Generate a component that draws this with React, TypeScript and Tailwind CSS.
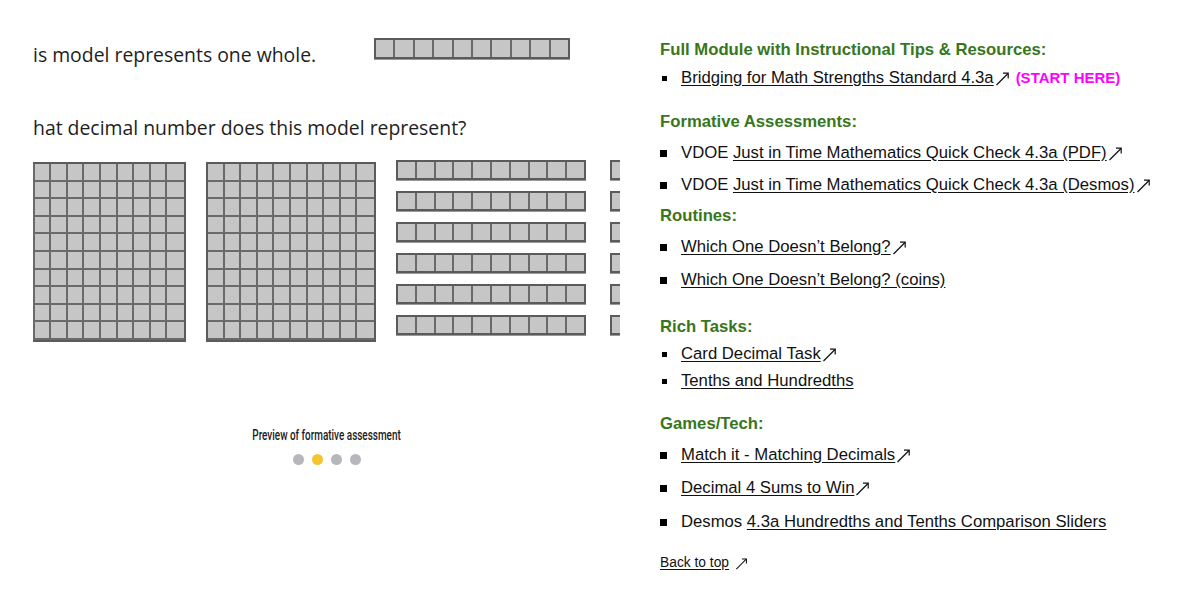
import React from 'react';

const cells = Array.from({ length: 10 }, (_, i) => i);
const rows = Array.from({ length: 6 }, (_, i) => i);

function Strip({ w }: { w: string }) {
  return (
    <div className={`flex shrink-0 ${w} h-[20px] border-2 border-[#5b5b5b] bg-[#c6c6c6] shadow-[0_1px_0_#999]`}>
      {cells.map((c) => (
        <div key={c} className="flex-1 border-r-2 border-[#6a6a6a] last:border-r-0" />
      ))}
    </div>
  );
}

function Hundred() {
  return (
    <div className="grid shrink-0 grid-cols-10 grid-rows-10 w-[170px] h-[180px] border-2 border-[#5b5b5b] bg-[#c6c6c6]">
      {Array.from({ length: 100 }, (_, i) => (
        <div key={i} className="border-r-2 border-b-2 border-[#6a6a6a] [&:nth-child(10n)]:border-r-0" />
      ))}
    </div>
  );
}

function Arrow({ small }: { small?: boolean }) {
  const s = small ? 13 : 15;
  return (
    <svg width={s} height={s} viewBox="0 0 15 15" className="inline-block ml-[1px] shrink-0" fill="none" stroke="#111" strokeWidth="1.2">
      <path d="M1.5 14 L13 2.5" />
      <path d="M8 2.2 H13.2 V7.5" />
    </svg>
  );
}

function Bullet({ big }: { big?: boolean }) {
  return big ? (
    <span className="w-[7px] h-[7px] bg-black shrink-0 mr-[14px]" />
  ) : (
    <span className="w-[5px] h-[5px] bg-black shrink-0 ml-[2px] mr-[14px]" />
  );
}

function Heading({ children, className = '' }: { children: React.ReactNode; className?: string }) {
  return <h2 className={`text-[16.7px] leading-6 font-bold text-[#38761d] ${className}`}>{children}</h2>;
}

function Item({ big, className = '', children }: { big?: boolean; className?: string; children: React.ReactNode }) {
  return (
    <li className={`flex items-center leading-6 whitespace-nowrap ${className}`}>
      <Bullet big={big} />
      <span className="flex items-center">{children}</span>
    </li>
  );
}

export default function App() {
  return (
    <div className="flex w-[1200px] h-[605px] bg-white overflow-hidden">
      <div className="ml-[33px] w-[587px] shrink-0 flex flex-col">
        <div className="overflow-hidden font-['Open_Sans',sans-serif] text-[#1e1e1e]">
          <div className="flex items-start pt-[38px]">
            <span className="text-[19.4px] leading-[30px] mt-[2px] w-[341px] shrink-0">is model represents one whole.</span>
            <Strip w="w-[196px] h-[21px]" />
          </div>
          <div className="text-[19.4px] leading-[30px] mt-[43px] whitespace-nowrap">hat decimal number does this model represent?</div>
          <div className="flex items-start mt-[19px] ml-[-17px] gap-[20px] w-[800px]">
            <Hundred />
            <Hundred />
            <div className="flex flex-col gap-[11px] -mt-[2px] shrink-0">
              {rows.map((r) => (
                <Strip key={r} w="w-[190px]" />
              ))}
            </div>
            <div className="flex flex-col gap-[11px] -mt-[2px] ml-[4px] shrink-0">
              {rows.map((r) => (
                <Strip key={r} w="w-[190px]" />
              ))}
            </div>
          </div>
        </div>
        <div className="mt-[85px] flex justify-center">
          <p className="inline-block scale-x-[0.71] whitespace-nowrap text-[14px] leading-4 font-medium text-[#1c1c1c] font-['Roboto',sans-serif]">
            Preview of formative assessment
          </p>
        </div>
        <div className="flex justify-center gap-[8px] mt-[11px]">
          <span className="w-[11px] h-[11px] rounded-full bg-[#b5b7bb]" />
          <span className="w-[11px] h-[11px] rounded-full bg-[#f3c630]" />
          <span className="w-[11px] h-[11px] rounded-full bg-[#b5b7bb]" />
          <span className="w-[11px] h-[11px] rounded-full bg-[#b5b7bb]" />
        </div>
      </div>

      <div className="ml-[40px] pt-[38px] flex-1 font-['Liberation_Sans',Arial,sans-serif] text-[16.7px] text-[#111]">
        <Heading>Full Module with Instructional Tips &amp; Resources:</Heading>
        <ul className="mt-[4px]">
          <Item>
            <a className="underline underline-offset-2">Bridging for Math Strengths Standard 4.3a</a>
            <Arrow />
            <span className="ml-[6px] text-[15px] font-bold text-[#ff00ff]">(START HERE)</span>
          </Item>
        </ul>

        <Heading className="mt-[20px]">Formative Assessments:</Heading>
        <ul>
          <Item big className="mt-[7px]">
            VDOE&nbsp;<a className="underline underline-offset-2">Just in Time Mathematics Quick Check 4.3a (PDF)</a>
            <Arrow />
          </Item>
          <Item big className="mt-[8px]">
            VDOE&nbsp;<a className="underline underline-offset-2">Just in Time Mathematics Quick Check 4.3a (Desmos)</a>
            <Arrow />
          </Item>
        </ul>

        <Heading className="mt-[7px]">Routines:</Heading>
        <ul>
          <Item big className="mt-[7px]">
            <a className="underline underline-offset-2">Which One Doesn’t Belong?</a>
            <Arrow />
          </Item>
          <Item big className="mt-[9px]">
            <a className="underline underline-offset-2">Which One Doesn’t Belong? (coins)</a>
          </Item>
        </ul>

        <Heading className="mt-[23px]">Rich Tasks:</Heading>
        <ul>
          <Item className="mt-[3px]">
            <a className="underline underline-offset-2">Card Decimal Task</a>
            <Arrow />
          </Item>
          <Item className="mt-[3px]">
            <a className="underline underline-offset-2">Tenths and Hundredths</a>
          </Item>
        </ul>

        <Heading className="mt-[19px]">Games/Tech:</Heading>
        <ul>
          <Item big className="mt-[7px]">
            <a className="underline underline-offset-2">Match it - Matching Decimals</a>
            <Arrow />
          </Item>
          <Item big className="mt-[9px]">
            <a className="underline underline-offset-2">Decimal 4 Sums to Win</a>
            <Arrow />
          </Item>
          <Item big className="mt-[10px]">
            Desmos&nbsp;<a className="underline underline-offset-2">4.3a Hundredths and Tenths Comparison Sliders</a>
          </Item>
        </ul>

        <p className="mt-[17px] text-[13.8px] leading-6 flex items-center">
          <a className="underline underline-offset-2">Back to top</a>
          <span className="ml-[5px] flex items-center">
            <Arrow small />
          </span>
        </p>
      </div>
    </div>
  );
}
